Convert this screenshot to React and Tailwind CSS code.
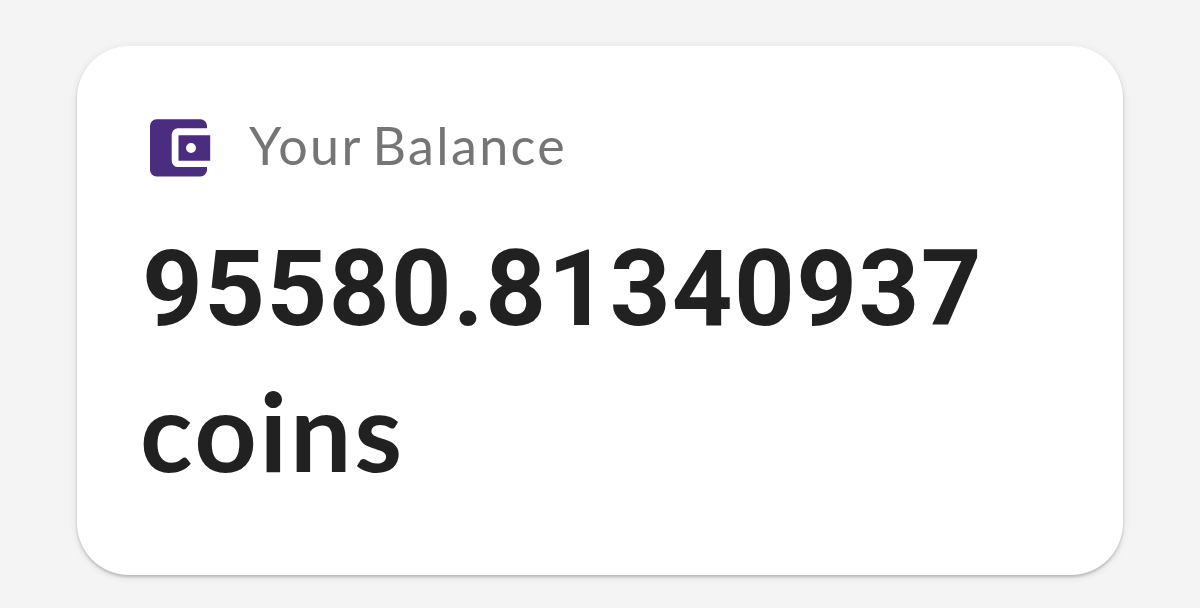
import React from 'react'

const balance = { amount: '95580.81340937', unit: 'coins' }

function WalletIcon() {
  return (
    <svg className="h-[62px] w-[62px] shrink-0" viewBox="0 0 62 62" fill="#4b2d7f">
      <path d="M58 51.700V53a6.500 6.500 0 0 1-6.500 6.500H7.500A6.500 6.500 0 0 1 1 53V8.800a6.500 6.500 0 0 1 6.500-6.500h44A6.500 6.500 0 0 1 58 8.800V11.300H29a6.300 6.300 0 0 0-6.300 6.300v26.100a6.300 6.300 0 0 0 6.300 6.300H58z" />
      <path fillRule="evenodd" d="M29.500 18.200H61.200v25.600H29.500z M42 26a5 5 0 1 0 0 10a5 5 0 1 0 0-10z" />
    </svg>
  )
}

export default function App() {
  return (
    <div className="flex h-[608px] w-[1200px] items-start bg-[#f4f4f4] px-[77px] pt-[46px]">
      <div className="h-[529px] w-[1047px] rounded-[52px] bg-white px-[65px] pt-[69px] shadow-[0_2px_3px_rgba(0,0,0,0.2),0_2px_9px_rgba(0,0,0,0.09)]">
        <div className="flex h-[64px] items-center pt-px pl-[7px]">
          <WalletIcon />
          <span className="-mt-[5px] ml-[38px] font-['Lato',sans-serif] text-[52px] leading-[64px] tracking-[2.400px] [word-spacing:-5px] whitespace-nowrap text-[#757575]">Your Balance</span>
        </div>
        <div className="mt-[36px] font-bold text-[#212121]">
          <div className="font-['Roboto',sans-serif] text-[106px] leading-[148px] tracking-[1.400px] whitespace-nowrap">{balance.amount}</div>
          <div className="-ml-[2px] font-['Lato',sans-serif] text-[109px] leading-[134px] tracking-[2.700px]">{balance.unit}</div>
        </div>
      </div>
    </div>
  )
}
